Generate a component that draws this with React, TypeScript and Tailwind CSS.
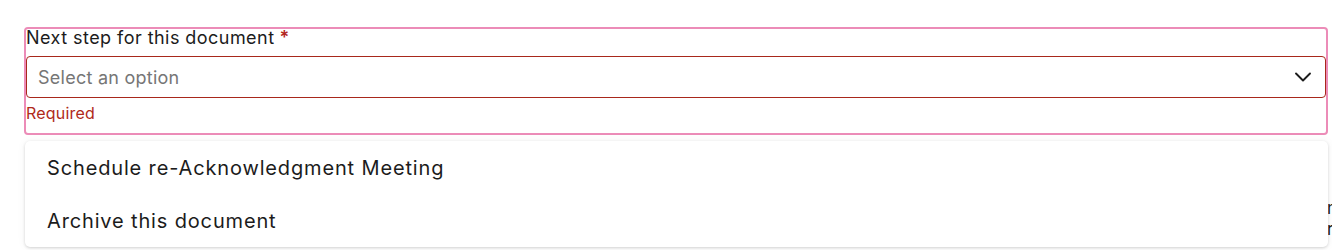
import React from "react";

export default function App() {
  const font = { fontFamily: 'Inter, "Noto Sans", sans-serif' };
  return (
    <div className="relative h-[250px] w-[1332px] overflow-hidden bg-white" style={font}>
      <div className="pl-[26px] pr-[6px] pt-[29px]">
        <div className="rounded-[2px] bg-white pb-[11px] outline-2 outline-[#ec8cb8]">
          <div className="flex h-[17px] items-center text-[18px] leading-none tracking-[0.45px] text-[#1c1c1c]">
            <span>Next step for this document</span>
            <span className="ml-[5px] font-semibold text-[#b3261e]">*</span>
          </div>
          <div className="mt-[10px] flex h-[42px] items-center justify-between rounded-[4px] border border-[#a8281b] bg-white pl-[11px] pr-[13px]">
            <span className="text-[18px] tracking-[0.25px] text-[#767676]">Select an option</span>
            <svg width="18" height="18" viewBox="0 0 18 18" fill="none">
              <path d="M2 5.5 L9 12.5 L16 5.5" stroke="#1c1c1c" strokeWidth="1.9" strokeLinecap="round" strokeLinejoin="round" />
            </svg>
          </div>
          <div className="mt-[6px] h-[18px] text-[16px] leading-[18px] tracking-[0.2px] text-[#b02a1a]">Required</div>
        </div>
      </div>
      <div className="absolute left-[1327px] top-[198px] flex flex-col text-[17px] leading-[21px] text-[#1c1c1c]">
        <span>n</span>
        <span>r</span>
      </div>
      <div className="absolute left-[25px] top-[141px] w-[1303px] rounded-[5px] bg-white shadow-[0_1px_3px_rgba(0,0,0,0.16),0_0_10px_rgba(0,0,0,0.05)]">
        <div className="flex h-[53px] items-center pl-[22px] text-[20px] tracking-[0.85px] text-[#1c1c1c]">Schedule re-Acknowledgment Meeting</div>
        <div className="flex h-[53px] items-center pl-[22px] text-[20px] tracking-[0.85px] text-[#1c1c1c]">Archive this document</div>
      </div>
    </div>
  );
}
